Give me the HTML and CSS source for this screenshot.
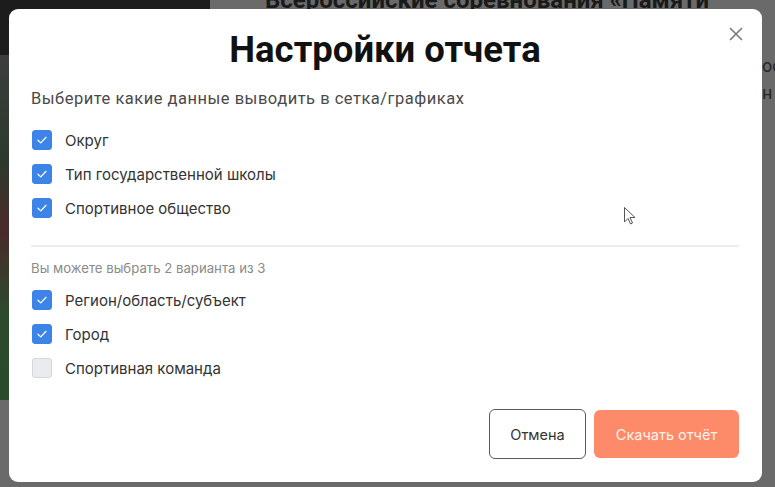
FILE: index.html
```html
<!DOCTYPE html>
<html lang="ru">
<head>
<meta charset="utf-8">
<link rel="stylesheet" href="styles.css">
</head>
<body>
<div class="page">
  <div class="page-top">
    <div class="hero-dark"></div>
    <div class="page-title">Всероссийские соревнования «Памяти</div>
  </div>
  <div class="page-mid">
    <div class="photo"></div>
    <div class="side-text"><span>ос</span><span>н</span></div>
  </div>
</div>
<div class="overlay">
  <div class="modal">
    <button class="close" aria-label="Закрыть">
      <svg width="14" height="14" viewBox="0 0 14 14"><path d="M1 1L13 13M13 1L1 13" stroke="#7a7a7a" stroke-width="1.6" fill="none"/></svg>
    </button>
    <h1 class="title">Настройки отчета</h1>
    <p class="lead">Выберите какие данные выводить в сетка/графиках</p>
    <ul class="list">
      <li class="item"><span class="box checked"><svg viewBox="0 0 20 20"><path d="M5.5 10.3L8.6 13.2L14.5 7" stroke="#fff" stroke-width="1.4" fill="none" stroke-linecap="round" stroke-linejoin="round"/></svg></span>Округ</li>
      <li class="item"><span class="box checked"><svg viewBox="0 0 20 20"><path d="M5.5 10.3L8.6 13.2L14.5 7" stroke="#fff" stroke-width="1.4" fill="none" stroke-linecap="round" stroke-linejoin="round"/></svg></span>Тип государственной школы</li>
      <li class="item"><span class="box checked"><svg viewBox="0 0 20 20"><path d="M5.5 10.3L8.6 13.2L14.5 7" stroke="#fff" stroke-width="1.4" fill="none" stroke-linecap="round" stroke-linejoin="round"/></svg></span>Спортивное общество</li>
    </ul>
    <hr class="divider">
    <p class="hint">Вы можете выбрать 2 варианта из 3</p>
    <ul class="list list-2">
      <li class="item"><span class="box checked"><svg viewBox="0 0 20 20"><path d="M5.5 10.3L8.6 13.2L14.5 7" stroke="#fff" stroke-width="1.4" fill="none" stroke-linecap="round" stroke-linejoin="round"/></svg></span>Регион/область/субъект</li>
      <li class="item"><span class="box checked"><svg viewBox="0 0 20 20"><path d="M5.5 10.3L8.6 13.2L14.5 7" stroke="#fff" stroke-width="1.4" fill="none" stroke-linecap="round" stroke-linejoin="round"/></svg></span>Город</li>
      <li class="item"><span class="box"></span>Спортивная команда</li>
    </ul>
    <div class="actions">
      <button class="btn btn-cancel">Отмена</button>
      <button class="btn btn-primary">Скачать отчёт</button>
    </div>
    <svg class="cursor" width="14" height="20" viewBox="0 0 14 20"><path d="M1.5 1.5V16L5 12.5L7.5 18L9.5 17L7 11.5H12Z" fill="#fff" stroke="#555" stroke-width="1"/></svg>
  </div>
</div>
</body>
</html>
```

FILE: styles.css
```css
* { box-sizing: border-box; }
html, body { margin: 0; padding: 0; }
body {
  width: 775px;
  height: 487px;
  overflow: hidden;
  background: #696969;
  font-family: Inter, "Noto Sans", sans-serif;
  position: relative;
}
.page { width: 775px; height: 487px; background: #6a6a6a; }
.page-top { display: flex; height: 55px; }
.hero-dark { width: 210px; height: 55px; background: #1c1c1c; }
.page-title {
  margin-left: 55px;
  margin-top: -14px;
  font-family: Roboto, sans-serif;
  font-weight: 700;
  font-size: 24px;
  color: #1a1a1a;
  white-space: nowrap;
}
.page-mid { display: flex; justify-content: space-between; height: 350px; }
.photo {
  width: 30px;
  height: 345px;
  background: linear-gradient(180deg, #3d3d3d 0%, #2c3a2e 30%, #4a2a2a 50%, #2e4a2e 75%, #2a4a2a 100%);
}
.side-text {
  display: flex;
  flex-direction: column;
  gap: 6px;
  font-family: Roboto, sans-serif;
  font-size: 18px;
  color: #262626;
  width: 13px;
  overflow: hidden;
}
.overlay {
  position: absolute;
  inset: 0;
}
.modal {
  position: absolute;
  left: 9px;
  top: 9px;
  width: 753px;
  height: 473px;
  background: #fff;
  border-radius: 9px;
  padding: 0 23px 0 22px;
  color: #2a2a2a;
}
.close {
  position: absolute;
  right: 19px;
  top: 18px;
  border: 0;
  background: none;
  padding: 0;
  width: 14px;
  height: 14px;
  cursor: pointer;
}
.close svg { display: block; }
.title {
  margin: 0;
  padding-top: 19px;
  text-align: center;
  font-family: Roboto, sans-serif;
  font-weight: 700;
  font-size: 36.5px;
  line-height: 44px;
  color: #111;
}
.lead {
  margin: 17px 0 0 0;
  font-family: Roboto, sans-serif;
  font-size: 16.5px;
  letter-spacing: 0.5px;
  line-height: 20px;
  color: #4a4a4a;
}
.list { list-style: none; margin: 21px 0 0 0; padding: 0; display: flex; flex-direction: column; gap: 14px; }
.list-2 { margin-top: 14px; }
.item {
  display: flex;
  align-items: center;
  gap: 13px;
  height: 20px;
  font-size: 15px;
  color: #333;
  padding-left: 1px;
}
.box {
  width: 20px;
  height: 20px;
  border-radius: 3px;
  background: #e9ebef;
  border: 1px solid #d3d7dd;
  flex: none;
}
.box.checked { background: #3d84e8; border-color: #3d84e8; }
.box svg { display: block; width: 18px; height: 18px; }
.divider {
  margin: 27px 0 0 0;
  border: 0;
  border-top: 2px solid #ececec;
}
.hint {
  margin: 13px 0 0 0;
  font-size: 13.2px;
  line-height: 16px;
  color: #8a8a8a;
}
.actions {
  display: flex;
  justify-content: flex-end;
  gap: 8px;
  margin-top: 31px;
}
.btn {
  height: 50px;
  border-radius: 6px;
  font-family: Inter, sans-serif;
  font-size: 14.5px;
  cursor: pointer;
}
.btn-cancel {
  width: 97px;
  background: #fff;
  border: 1px solid #5a5a5a;
  color: #333;
}
.btn-primary {
  width: 145px;
  height: 48px;
  margin-top: 1px;
  background: #fd8a68;
  border: 0;
  color: #fff3ee;
}
.cursor {
  position: absolute;
  left: 614px;
  top: 197px;
}
```
